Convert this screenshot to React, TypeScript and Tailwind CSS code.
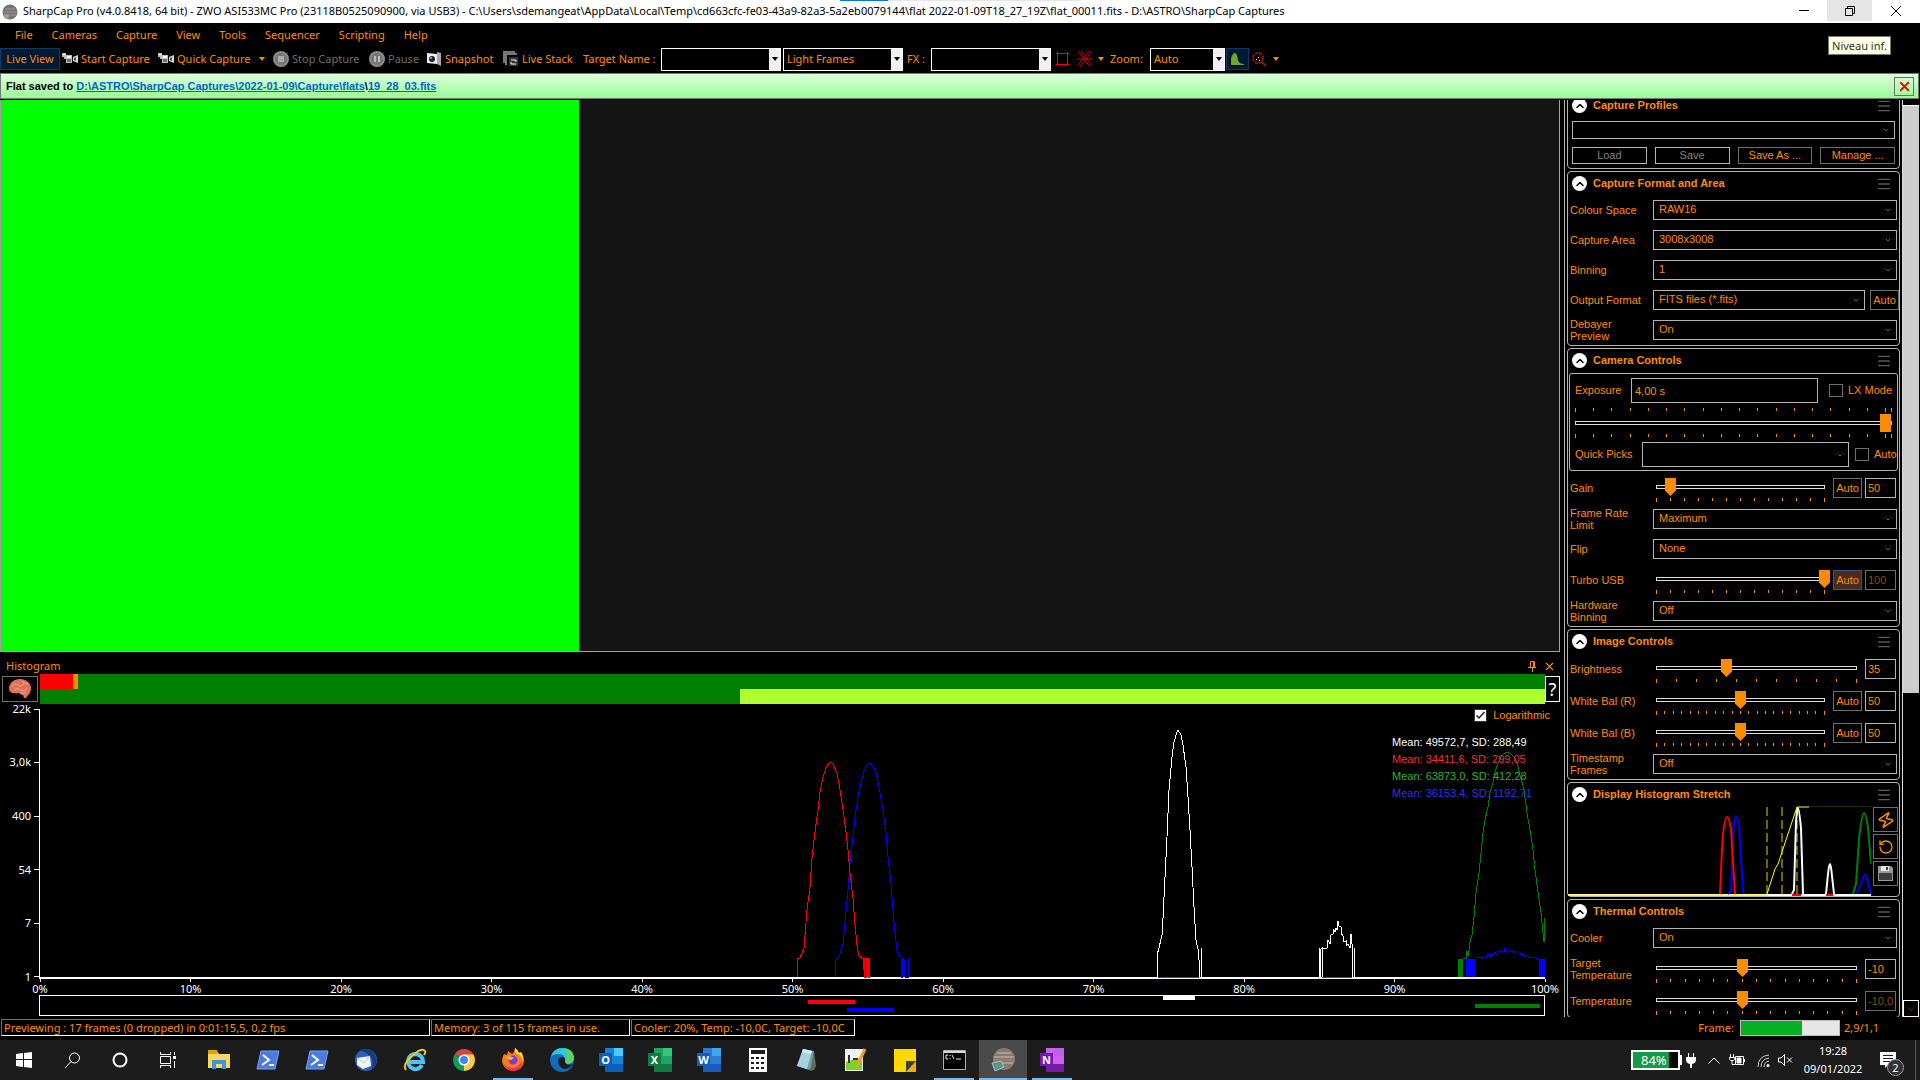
import React from "react";
import { ChevronDown, ChevronUp, Menu, RotateCcw, X, Zap } from "lucide-react";

const MENU = ["File", "Cameras", "Capture", "View", "Tools", "Sequencer", "Scripting", "Help"];

const UI = "font-['Noto_Sans','Open_Sans',sans-serif]";
const CLASSIC = "font-['Liberation_Sans',Arial,sans-serif]";

/* ---------- TOOLBAR ---------- */

const CameraIcon = () => (
  <svg width="16" height="14" viewBox="0 0 16 14">
    <path d="M0 1h4v2h6v8H4V7H2V5H0z" fill="#bdbdbd" />
    <path d="M1 2h3v1H1zM5 4h4v2H5z" fill="#fff" />
    <path d="M11 5l5-2v8l-5-2z" fill="#d8d8d8" />
    <path d="M5 7h4v3H5z" fill="#6f6f6f" />
    <path d="M12 6l2-1v4l-2-1z" fill="#555" />
  </svg>
);

const RoundIcon = ({ children }: { children: React.ReactNode }) => (
  <svg width="16" height="16" viewBox="0 0 16 16">
    <circle cx="8" cy="8" r="8" fill="#8a8a8a" />
    <circle cx="8" cy="8" r="6" fill="#767676" />
    {children}
  </svg>
);

const Caret = ({ className }: { className?: string }) => (
  <svg width="6" height="4" viewBox="0 0 6 4" className={className}>
    <path d="M0 0h6L3 4z" fill="currentColor" />
  </svg>
);

type ComboProps = { label: string; value?: string; className: string };

const ToolCombo = ({ label, value = "", className }: ComboProps) => (
  <div className={`flex h-[23px] border border-white bg-black ${className}`}>
    <select
      aria-label={label}
      defaultValue={value}
      className="min-w-0 flex-1 appearance-none bg-black pl-[3px] text-[#ff8c00] outline-none"
    >
      <option>{value}</option>
    </select>
    <span className="flex w-[11px] items-center justify-center bg-[#f0f0f0] text-black">
      <Caret />
    </span>
  </div>
);

const Toolbar = () => (
  <div className={`mb-[2px] flex h-[24px] shrink-0 items-center text-[11px] whitespace-nowrap text-[#ff8c00] ${UI}`}>
    <button className="h-[22px] w-[60px] border border-[#0c3a66] bg-[#001a33]">Live View</button>
    <button className="flex w-[95px] items-center gap-[3px] pl-[2px]">
      <CameraIcon />
      Start Capture
    </button>
    <button className="flex w-[118px] items-center gap-[3px] pl-[3px]">
      <CameraIcon />
      Quick Capture
      <Caret className="ml-[6px]" />
    </button>
    <button disabled className="flex w-[93px] items-center gap-[3px] text-[#6d6d6d]">
      <RoundIcon>
        <path d="M5 5h6v6H5z" fill="#aaa" />
      </RoundIcon>
      Stop Capture
    </button>
    <button disabled className="flex w-[60px] items-center gap-[3px] pl-[3px] text-[#6d6d6d]">
      <RoundIcon>
        <path d="M5 5h2v6H5zM9 5h2v6H9z" fill="#bbb" />
      </RoundIcon>
      Pause
    </button>
    <button className="flex w-[74px] items-center gap-[3px]">
      <svg width="16" height="14" viewBox="0 0 16 14">
        <path d="M1 1l10 1v10L1 11z" fill="#eee" />
        <path d="M11 0l4 1v13l-4-2z" fill="#aaa" />
        <circle cx="6" cy="7" r="3" fill="#222" />
        <circle cx="5" cy="6" r="1" fill="#6cf" />
      </svg>
      Snapshot
    </button>
    <button className="flex w-[83px] items-center gap-[3px] pl-[3px]">
      <svg width="16" height="16" viewBox="0 0 16 16" fill="none">
        <path d="M1 12V1h11M3 14V3h11" stroke="#777" strokeWidth="2" />
        <path d="M6 6h9v9H6z" fill="#333" />
        <path d="M8 9h5v2M13 13H8v-2" stroke="#fff" />
      </svg>
      Live Stack
    </button>
    <span className="w-[78px]">Target Name :</span>
    <ToolCombo label="Target name" className="w-[120px]" />
    <ToolCombo label="Frame type" value="Light Frames" className="ml-[2px] w-[120px]" />
    <span className="w-[28px] pl-1">FX :</span>
    <ToolCombo label="FX" className="w-[120px]" />
    <button aria-label="Selection area" className="w-[22px] pl-[5px]">
      <svg width="13" height="14" viewBox="0 0 13 14" fill="none" stroke="#f00">
        <path d="M1.5 1.5h10v11h-10z" />
        <path d="M0 1.5h3M1.5 0v3M10 1.5h3M11.5 0v3M0 12.5h3M1.5 11v3M10 12.5h3M11.5 11v3" />
      </svg>
    </button>
    <button aria-label="Reticule" className="flex w-[37px] items-center gap-[5px] pl-[4px]">
      <svg width="16" height="16" viewBox="0 0 16 16" fill="none" stroke="#d00000">
        <path d="M1 0l12 16M4 0l11 15M15 0L3 16M12 0L1 14M0 8h16" />
      </svg>
      <Caret />
    </button>
    <span className="w-[40px]">Zoom:</span>
    <ToolCombo label="Zoom" value="Auto" className="w-[75px]" />
    <button aria-label="Histogram" className="ml-px flex h-[22px] w-[23px] items-center justify-center border border-[#0c3a66] bg-[#001a33]">
      <svg width="15" height="14" viewBox="0 0 15 14">
        <path d="M1 13V6q2-5 4-5t3 7q1 4 6 4v1z" fill="#6aa832" />
        <path d="M0 0h1v13h14v1H0z" fill="#000" />
      </svg>
    </button>
    <button aria-label="Focus assistant" className="flex items-center gap-[6px] pl-[3px]">
      <svg width="15" height="15" viewBox="0 0 15 15" fill="none">
        <circle cx="6" cy="6" r="5" stroke="#8b1a1a" strokeWidth="2" strokeDasharray="3 1" />
        <path d="M10 10l4 4" stroke="#8b1a1a" strokeWidth="2" />
        <path d="M6 5h1v1H6zM4 7h1v1H4zM7 8h1v1H7z" fill="#fff" />
      </svg>
      <Caret />
    </button>
  </div>
);

/* ---------- HISTOGRAM ---------- */

const Y_LABELS = ["22k", "3,0k", "400", "54", "7", "1"];
const X_LABELS = ["0%", "10%", "20%", "30%", "40%", "50%", "60%", "70%", "80%", "90%", "100%"];

const CURVES = [
  {
    color: "#00f",
    points:
      "835,977 836,959 839,957 843,944 845,923 848,890 850,863 853,837 855,817 858,797 861,783 864,771 867,765 869,763 872,765 876,772 879,787 883,810 886,833 888,857 891,883 893,910 895,933 897,950 899,955 901,958 901,977 902,977 902,958 903,977 903,958 904,977 904,960 905,977 905,977 908,977 908,958 909,977",
  },
  {
    color: "#f00",
    points:
      "797,977 797,959 800,958 802,953 804,948 807,910 810,887 812,858 815,832 818,810 820,792 823,777 826,768 829,763 831,762 833,764 837,773 840,790 843,810 846,832 848,850 850,873 853,898 855,925 857,945 859,956 863,959 863,970 864,958 864,977 866,977 866,958 867,977 867,960 868,958 868,977 869,977 869,959",
  },
  {
    color: "#fff",
    points:
      "1157,977 1157,955 1159,948 1162,935 1163,918 1165,877 1167,837 1169,790 1172,757 1174,742 1177,732 1178,730 1181,735 1183,745 1186,767 1188,797 1190,830 1192,867 1194,907 1196,940 1198,949 1199,960 1199,977 1201,977 1201,948 1202,977",
  },
  {
    color: "#fff",
    points:
      "1319,977 1319,948 1320,977 1320,950 1322,948 1322,977 1322,948 1327,948 1328,940 1330,944 1331,935 1333,934 1333,929 1335,932 1336,928 1337,930 1338,921 1339,926 1341,927 1341,933 1343,936 1344,942 1346,941 1346,946 1348,944 1350,948 1351,934 1351,943 1352,944 1352,977 1354,977 1354,948",
  },
  {
    color: "#008000",
    points:
      "1458,959 1458,977 1459,959 1460,977 1460,959 1461,977 1462,959 1462,977 1463,959 1466,958 1467,951 1468,956 1469,950 1470,942 1472,935 1474,917 1476,893 1479,873 1481,853 1483,833 1485,820 1488,807 1490,793 1493,782 1495,772 1498,763 1501,757 1504,754 1507,752 1511,754 1514,757 1517,763 1520,775 1524,790 1527,813 1530,830 1533,850 1535,870 1538,892 1541,913 1543,933 1544,942 1544,918",
  },
  {
    color: "#00f",
    points:
      "1466,958 1466,977 1467,959 1468,977 1469,959 1470,975 1471,959 1472,977 1473,959 1474,977 1475,959 1476,958 1480,957 1482,959 1484,956 1486,958 1488,954 1490,957 1491,953 1493,956 1495,952 1496,955 1498,951 1500,953 1502,950 1504,952 1505,948 1506,953 1508,950 1510,952 1512,950 1514,953 1516,951 1518,953 1520,953 1522,956 1523,953 1525,957 1527,955 1530,958 1533,957 1539,959 1540,977 1541,959 1542,977 1542,959 1543,977 1544,959 1544,977",
  },
];

const STATS = [
  { text: "Mean: 49572,7, SD: 288,49", className: "text-white" },
  { text: "Mean: 34411,6, SD: 299,05", className: "text-[#f03030]" },
  { text: "Mean: 63873,0, SD: 412,28", className: "text-[#30b030]" },
  { text: "Mean: 36153,4, SD: 1192,71", className: "text-[#3030f0]" },
];

const BrainIcon = () => (
  <svg width="24" height="20" viewBox="0 0 24 20">
    <path d="M1 10C1 4 6 0 12 0s11 4 11 9c0 3-1 6-3 7l-2 3h-2l-1-3c-2 0-3-1-4-2-2 1-4 0-6 0-2 0-4-2-4-4z" fill="#e0715a" />
    <path d="M4 7q3-4 6-1t6-2M6 11q3-3 6 0t7-2M14 2q3 3 6 3M13 14q3 1 5-1" stroke="#f3a490" fill="none" />
  </svg>
);

const Histogram = () => (
  <section className="shrink-0">
    <div className={`flex h-[22px] items-center pt-[6px] pr-[4px] pl-[6px] text-[11px] text-[#ff8c00] ${UI}`}>
      <h2 className="flex-1">Histogram</h2>
      <button aria-label="Pin" className="mr-[6px]">
        <svg width="9" height="11" viewBox="0 0 9 11" fill="none" stroke="currentColor">
          <path d="M2.5 6V.5h4V6M0 6.5h8M4.5 7v4M5.5 1v5" />
        </svg>
      </button>
      <button aria-label="Close histogram">
        <X size={13} />
      </button>
    </div>

    <div className="grid grid-cols-[40px_1fr_15px]">
      {/* EXPOSURE QUALITY BAR */}
      <button aria-label="Smart histogram" className="mx-[2px] my-[2px] flex h-[26px] items-center justify-center border border-[#6e6e6e]">
        <BrainIcon />
      </button>
      <div className="h-[30px] bg-[#008000]">
        <div className="flex h-[15px]">
          <div className="w-[33px] bg-[#f00]" />
          <div className="w-[5px] bg-[#ff8c00]" />
        </div>
        <div className="ml-[46.5%] h-[15px] bg-[#adff2f]" />
      </div>
      <button className={`my-[2px] h-[26px] border border-white text-[18px] leading-none text-white ${UI}`}>?</button>

      {/* Y AXIS */}
      <div className={`flex flex-col justify-between pt-[5px] pr-px pb-[2px] text-[11px] text-white ${UI}`}>
        {Y_LABELS.map(label => (
          <div key={label} className="flex h-0 items-center justify-end gap-[3px]">
            {label}
            <span className="h-px w-[5px] bg-white" />
          </div>
        ))}
      </div>

      {/* PLOT */}
      <div className="relative h-[275px]">
        <svg
          className="-ml-px h-full w-[calc(100%+1px)]"
          viewBox="39 704 1506 275"
          preserveAspectRatio="none"
          shapeRendering="crispEdges"
          fill="none"
        >
          <path d="M39.5 709V978" stroke="#fff" />
          <path d="M39 978H1545" stroke="#fff" strokeWidth="2" />
          {CURVES.map(curve => (
            <polyline key={curve.points} points={curve.points} stroke={curve.color} vectorEffect="non-scaling-stroke" />
          ))}
          <path d="M1158 977.5h41M1322 977.5h30" stroke="#f00" />
        </svg>
        <div className={`absolute top-[3px] right-[-5px] text-[11px] ${CLASSIC}`}>
          <label className="flex h-[16px] items-center gap-[6px] text-[#ff8c00]">
            <span className="grid">
              <input type="checkbox" defaultChecked className="h-[13px] w-[13px] appearance-none border border-[#333] bg-white [grid-area:1/1]" />
              <svg width="13" height="13" viewBox="0 0 13 13" fill="none" className="pointer-events-none [grid-area:1/1]">
                <path d="M2.5 6.5L5 9l5.5-6" stroke="#222" strokeWidth="1.5" />
              </svg>
            </span>
            Logarithmic
          </label>
        </div>
        <div className={`absolute top-[30px] right-[16px] w-[137px] text-[11px] leading-[17px] whitespace-nowrap ${CLASSIC}`}>
          {STATS.map(stat => (
            <div key={stat.text} className={stat.className}>
              {stat.text}
            </div>
          ))}
        </div>
      </div>
      <div />

      {/* X AXIS */}
      <div />
      <div className={`flex h-[16px] justify-between text-[11px] leading-[14px] text-white ${UI}`}>
        {X_LABELS.map(label => (
          <div key={label} className="flex w-0 flex-col items-center">
            <span className="h-[3px] w-px shrink-0 bg-white" />
            {label}
          </div>
        ))}
      </div>
      <div />

      {/* CHANNEL RANGES */}
      <div />
      <svg
        className="-ml-px h-[22px] w-[calc(100%+1px)]"
        viewBox="39 995 1506 22"
        preserveAspectRatio="none"
        shapeRendering="crispEdges"
      >
        <path d="M39.5 995.5h1505v20h-1505z" fill="none" stroke="#fff" />
        <path d="M808 1000h47v4h-47z" fill="#f00" />
        <path d="M847 1008h47v4h-47z" fill="#00f" />
        <path d="M1163 995h32v5h-32z" fill="#fff" />
        <path d="M1475 1004h65v4h-65z" fill="#008000" />
      </svg>
      <div />
    </div>
  </section>
);

/* ---------- SIDE PANEL ---------- */

const Group = ({ title, children }: { title: string; children: React.ReactNode }) => (
  <section className="shrink-0 rounded-[4px] border border-[#b4b4b4]">
    <div className="flex h-[23px] items-center pr-[7px] pl-[4px]">
      <button aria-label={`Collapse ${title}`} className="flex h-[15px] w-[15px] items-center justify-center rounded-full bg-white text-black">
        <ChevronUp size={12} strokeWidth={3} />
      </button>
      <h2 className="ml-[6px] flex-1 font-bold">{title}</h2>
      <button aria-label={`${title} menu`} className="text-[#5a5a5a]">
        <Menu size={16} strokeWidth={2} />
      </button>
    </div>
    {children}
  </section>
);

const PanelSelect = ({ label, value = "", className = "" }: { label: string; value?: string; className?: string }) => (
  <div className={`grid min-w-0 grid-rows-[minmax(0,1fr)] border border-[#b4b4b4] ${className}`}>
    <select
      aria-label={label}
      defaultValue={value}
      className="h-full min-h-0 min-w-0 appearance-none bg-transparent pb-[2px] pl-[5px] leading-[14px] outline-none [grid-area:1/1]"
    >
      <option>{value}</option>
    </select>
    <ChevronDown size={8} className="pointer-events-none mr-[4px] self-center justify-self-end text-[#8a8a8a] [grid-area:1/1]" />
  </div>
);

const SelectRow = ({ label, value, auto }: { label: string; value: string; auto?: boolean }) => (
  <div className="flex h-[30px] items-center pr-[2px] pl-[2px]">
    <span className="w-[83px] shrink-0 pr-[8px] leading-[12px]">{label}</span>
    <PanelSelect label={label} value={value} className="h-[20px] flex-1" />
    {auto && <button className="-mr-[2px] ml-[5px] h-[20px] w-[29px] border border-[#6e6e6e]">Auto</button>}
  </div>
);

const Ticks = ({ count }: { count: number }) => (
  <div className="mx-[5px] flex justify-between">
    {Array.from({ length: count }, (_, i) => (
      <span key={i} className={`w-px bg-[#ff8c00] ${i === 0 || i === count - 1 ? "h-[4px]" : "h-[3px]"}`} />
    ))}
  </div>
);

type RangeProps = { label: string; value: number; pointed?: boolean };

const Range = ({ label, value, pointed }: RangeProps) => (
  <div className="grid items-center">
    <div className="mx-[5px] h-[4px] border border-[#dcdcdc] [grid-area:1/1]" />
    <input
      type="range"
      aria-label={label}
      min={0}
      max={1000}
      defaultValue={value}
      className={`h-[18px] w-full min-w-0 appearance-none bg-transparent [grid-area:1/1] [&::-webkit-slider-thumb]:h-[18px] [&::-webkit-slider-thumb]:w-[11px] [&::-webkit-slider-thumb]:appearance-none [&::-webkit-slider-thumb]:bg-[#ff8c00] ${
        pointed ? "[&::-webkit-slider-thumb]:[clip-path:polygon(0_0,100%_0,100%_70%,50%_100%,0_70%)]" : ""
      }`}
    />
  </div>
);

type SliderRowProps = {
  label: string;
  value: number;
  ticks: number;
  text: string;
  auto?: "off" | "on";
  disabled?: boolean;
};

const SliderRow = ({ label, value, ticks, text, auto, disabled }: SliderRowProps) => (
  <div className="flex h-[32px] items-start gap-[3px] pt-[6px] pr-[3px] pl-[2px]">
    <span className="-mr-[3px] flex h-[20px] w-[81px] shrink-0 items-center pr-[10px] leading-[12px]">{label}</span>
    <div className="min-w-0 flex-1">
      <Range label={label} value={value} pointed />
      <div className="h-[2px]" />
      <Ticks count={ticks} />
    </div>
    {auto && (
      <button className={`h-[20px] w-[29px] border ${auto === "on" ? "border-[#2a5a8c] bg-[#4a2a1c]" : "border-[#6e6e6e]"}`}>
        Auto
      </button>
    )}
    <input
      aria-label={`${label} value`}
      defaultValue={text}
      disabled={disabled}
      className={`h-[20px] w-[31px] border bg-black pl-[2px] outline-none ${disabled ? "border-[#6e6e6e] text-[#8a4c00]" : "border-[#b4b4b4]"}`}
    />
  </div>
);

const CheckBox = ({ label }: { label: string }) => (
  <label className="flex shrink-0 items-center gap-[5px] whitespace-nowrap">
    <input type="checkbox" className="h-[13px] w-[14px] appearance-none border border-[#6e6e6e] bg-black" />
    {label}
  </label>
);

/* the last step of the exposure scale is shorter than the others */
const ExposureTicks = () => (
  <div className="flex h-[4px] items-center">
    <div className="flex-1">
      <Ticks count={18} />
    </div>
    <span className="mr-[5px] h-[4px] w-px bg-[#ff8c00]" />
  </div>
);

const Exposure = () => (
  <div className="mx-px my-px h-[98px] rounded-[3px] border border-[#b4b4b4]">
    <div className="mt-[4px] flex h-[25px] items-center pl-[5px]">
      <label htmlFor="exposure" className="w-[56px]">
        Exposure
      </label>
      <input
        id="exposure"
        defaultValue="4,00 s"
        className="h-[25px] min-w-0 flex-1 border border-[#b4b4b4] bg-black pl-[3px] outline-none"
      />
      <div className="w-[79px] shrink-0 pl-[11px]">
        <CheckBox label="LX Mode" />
      </div>
    </div>
    <div className="pt-[5px]">
      <ExposureTicks />
      <div className="h-[2px]" />
      <Range label="Exposure" value={981} />
      <div className="h-[2px]" />
      <ExposureTicks />
    </div>
    <div className="mt-[4px] flex h-[25px] items-center pl-[5px]">
      <span className="w-[67px] shrink-0">Quick Picks</span>
      <PanelSelect label="Quick picks" className="h-[25px] flex-1" />
      <div className="w-[48px] shrink-0 pl-[6px]">
        <CheckBox label="Auto" />
      </div>
    </div>
  </div>
);

const Stretch = () => (
  <div className="flex h-[90px]">
    <svg width="303" height="90" viewBox="0 0 303 90" fill="none" strokeWidth="2">
      <path d="M0 89h303" stroke="#fff" />
      <path d="M0 89.5h199" stroke="#ff0" />
      <path d="M199 1v88M214 1v88M229 1v88" stroke="#6b6b00" strokeDasharray="9 4" />
      <path d="M160 88l3-3 2-60q2-15 3-15t3 8l4 67 1 3" stroke="#00f" />
      <path d="M152 88l2-45q2-32 5-32 2 0 4 12l4 65" stroke="#f00" />
      <path d="M224 88l2-4 2-68q1-14 2-14t3 20l2 66" stroke="#fff" />
      <path d="M258 88l2-20q1-10 2-10t2 12l2 18" stroke="#fff" />
      <path d="M285 88l3-10 3-45q3-26 5-26t4 15l3 36" stroke="#008000" />
      <path d="M289 88l4-10q2-9 4-9t3 8l3 11" stroke="#00f" />
      <path d="M224 89h9M258 89h7" stroke="#f00" />
      <path d="M199 88l8-25 3-5 19-57h12" stroke="#ff0" strokeWidth="1" />
      <path d="M241 .5h62" stroke="#2a2a00" strokeWidth="1" />
    </svg>
    <div className="flex flex-1 flex-col items-end gap-[2px] pt-px pr-px">
      <button aria-label="Auto stretch" className="flex h-[25px] w-[25px] items-center justify-center border border-[#6e6e6e]">
        <Zap size={18} strokeWidth={2} className="rotate-12" />
      </button>
      <button aria-label="Reset stretch" className="flex h-[25px] w-[25px] items-center justify-center border border-[#6e6e6e]">
        <RotateCcw size={16} strokeWidth={2} />
      </button>
      <button aria-label="Save stretch" className="flex h-[25px] w-[25px] items-center justify-center border border-[#6e6e6e]">
        <svg width="15" height="15" viewBox="0 0 15 15">
          <path d="M0 0h13l2 2v13H0z" fill="#9a9a9a" />
          <path d="M3 0h8v5H3z" fill="#e8e8e8" />
          <path d="M8 1h2v3H8zM1 7h13v7H1z" fill="#3c3c3c" />
        </svg>
      </button>
    </div>
  </div>
);

const SidePanel = () => (
  <aside className={`flex w-[356px] shrink-0 border-l border-[#b4b4b4] text-[11px] text-[#ff8c00] ${CLASSIC}`}>
    <div className="min-h-0 flex-1 overflow-hidden pr-[2px] pl-[2px]">
      <div className="-mt-[7px] flex flex-col gap-[2px]">
        <Group title="Capture Profiles">
          <div className="h-[51px] px-[4px] pt-[4px]">
            <PanelSelect label="Capture profile" className="h-[18px]" />
            <div className="mt-[8px] grid grid-cols-4 gap-[8px]">
              <button disabled className="h-[17px] border border-[#b4b4b4] leading-none text-[#808080]">Load</button>
              <button disabled className="h-[17px] border border-[#b4b4b4] leading-none text-[#808080]">Save</button>
              <button className="h-[17px] border border-[#6e6e6e] leading-none">Save As ...</button>
              <button className="h-[17px] border border-[#6e6e6e] leading-none">Manage ...</button>
            </div>
          </div>
        </Group>

        <Group title="Capture Format and Area">
          <SelectRow label="Colour Space" value="RAW16" />
          <SelectRow label="Capture Area" value="3008x3008" />
          <SelectRow label="Binning" value="1" />
          <SelectRow label="Output Format" value="FITS files (*.fits)" auto />
          <SelectRow label="Debayer Preview" value="On" />
        </Group>

        <Group title="Camera Controls">
          <Exposure />
          <SliderRow label="Gain" value={83} ticks={13} text="50" auto="off" />
          <SelectRow label="Frame Rate Limit" value="Maximum" />
          <SelectRow label="Flip" value="None" />
          <SliderRow label="Turbo USB" value={1000} ticks={13} text="100" auto="on" disabled />
          <SelectRow label="Hardware Binning" value="Off" />
        </Group>

        <Group title="Image Controls">
          <SliderRow label="Brightness" value={350} ticks={11} text="35" />
          <SliderRow label="White Bal (R)" value={500} ticks={21} text="50" auto="off" />
          <SliderRow label="White Bal (B)" value={500} ticks={21} text="50" auto="off" />
          <SelectRow label="Timestamp Frames" value="Off" />
        </Group>

        <Group title="Display Histogram Stretch">
          <Stretch />
        </Group>

        <Group title="Thermal Controls">
          <SelectRow label="Cooler" value="On" />
          <SliderRow label="Target Temperature" value={430} ticks={15} text="-10" />
          <SliderRow label="Temperature" value={430} ticks={15} text="-10,0" disabled />
        </Group>
      </div>
    </div>

    {/* SCROLLBAR */}
    <div className="flex w-[18px] flex-col border-l border-[#dcdcdc] pr-px">
      <div className="h-[6px] border-b border-white bg-black" />
      <div className="h-[64%] bg-[#cdcdcd]" />
      <div className="flex-1" />
      <button aria-label="Scroll down" className="flex h-[17px] items-center justify-center border border-white text-[#7a3030]">
        <ChevronDown size={10} />
      </button>
    </div>
  </aside>
);

/* ---------- TASKBAR ---------- */

const OfficeIcon = ({ letter, dark, mid, light }: { letter: string; dark: string; mid: string; light: string }) => (
  <svg width="24" height="24" viewBox="0 0 24 24">
    <path d="M6 0h18v24H6z" fill={mid} />
    <path d="M15 0h9v8h-9z" fill={light} />
    <path d="M6 16h18v8H6z" fill={dark} />
    <path d="M0 5h13v13H0z" fill={dark} />
    <text x="6.5" y="15.5" textAnchor="middle" fontSize="11" fontWeight="700" fill="#fff" className={UI}>
      {letter}
    </text>
  </svg>
);

const PowerShell = () => (
  <svg width="24" height="20" viewBox="0 0 24 20">
    <path d="M5 1h18l-4 18H1z" fill="#4a7be0" stroke="#7aa0ee" />
    <path d="M7 5l6 5-7 5M13 15h5" stroke="#fff" strokeWidth="2" fill="none" />
  </svg>
);

const APPS: { name: string; state?: "open" | "active"; icon: React.ReactNode }[] = [
  {
    name: "File Explorer",
    icon: (
      <svg width="22" height="20" viewBox="0 0 22 20">
        <path d="M0 1h9l2 3h11v14H0z" fill="#ffd65c" />
        <path d="M0 0h9v4H0z" fill="#e0a010" />
        <path d="M4 10h14v9h-4v-5H8v5H4z" fill="#3a96dd" />
      </svg>
    ),
  },
  { name: "PowerShell", icon: <PowerShell /> },
  { name: "PowerShell ISE", icon: <PowerShell /> },
  {
    name: "Thunderbird",
    icon: (
      <svg width="24" height="24" viewBox="0 0 24 24">
        <circle cx="12" cy="12" r="11" fill="#2a62b8" />
        <path d="M5 3q8-5 14 1 6 7 2 14l-4 4q4-9-1-14T5 3z" fill="#173a80" />
        <path d="M3 10l13-2 1 10-8 3-6-4z" fill="#f4f4f4" />
        <path d="M3 10l7 5 6-7" stroke="#b8c4d4" fill="none" />
      </svg>
    ),
  },
  {
    name: "Internet Explorer",
    icon: (
      <svg width="24" height="24" viewBox="0 0 24 24" fill="none">
        <path d="M19 17q-3 5-8 4-6-2-6-8 1-7 8-7 7 1 7 8H7" stroke="#4cc3f0" strokeWidth="4" />
        <path d="M3 22Q-1 17 9 8T22 3q1 1-1 4" stroke="#f5c518" strokeWidth="2" />
      </svg>
    ),
  },
  {
    name: "Chrome",
    icon: (
      <svg width="24" height="24" viewBox="0 0 24 24">
        <path d="M12 12L2.5 6.5A11 11 0 0 1 21.5 6.5z" fill="#db4437" />
        <path d="M12 12L21.5 6.5A11 11 0 0 1 12 23z" fill="#ffcd40" />
        <path d="M12 12V23A11 11 0 0 1 2.5 6.5z" fill="#0f9d58" />
        <path d="M12 6.5h9.5L17 15z" fill="#ffcd40" />
        <circle cx="12" cy="12" r="5.5" fill="#fff" />
        <circle cx="12" cy="12" r="4" fill="#4285f4" />
      </svg>
    ),
  },
  {
    name: "Firefox",
    state: "open",
    icon: (
      <svg width="24" height="24" viewBox="0 0 24 24">
        <path d="M3 6l3 1 1-4 4 3q2-1 3-6 3 2 4 5l2-1q3 4 3 9-1 9-11 10Q2 22 1 13q0-4 2-7z" fill="#ff7a1a" />
        <path d="M2 14q2 6 9 6t10-7q1 8-9 10Q3 22 2 14z" fill="#ff2a5f" />
        <path d="M14 0q3 2 4 5l2-1q3 4 2 9-2-6-6-7-3-2-2-6z" fill="#ffd43a" />
        <circle cx="12" cy="12" r="4.5" fill="#7a3fe0" />
        <path d="M5 9q4-2 8 1l-3 2q-3 0-5-3z" fill="#ffb02a" />
      </svg>
    ),
  },
  {
    name: "Edge",
    icon: (
      <svg width="24" height="24" viewBox="0 0 24 24">
        <circle cx="12" cy="12" r="12" fill="#0f6cbd" />
        <path d="M1 9Q3 0 13 0q10 1 11 9 0 7-7 7-4-1-2-4 0-6-7-6-5 0-7 3z" fill="#2fc6d8" />
        <path d="M14 0q9 1 10 9 0 7-7 7-3-1-2-3 6-6-1-13z" fill="#5ad65c" />
        <path d="M8 12q1-3 5-3 3 1 2 4 0 3 4 4l4-1q-4 5-9 5-6-2-6-9z" fill="#1c1c1c" />
      </svg>
    ),
  },
  { name: "Outlook", icon: <OfficeIcon letter="O" dark="#0a5fb8" mid="#1484d8" light="#4cc8f8" /> },
  { name: "Excel", icon: <OfficeIcon letter="X" dark="#107c41" mid="#21a366" light="#33c481" /> },
  { name: "Word", icon: <OfficeIcon letter="W" dark="#185abd" mid="#2b7cd3" light="#41a5ee" /> },
  {
    name: "Calculator",
    icon: (
      <svg width="18" height="24" viewBox="0 0 18 24">
        <path d="M0 0h18v24H0z" fill="#fff" />
        <path d="M2 2h14v4H2zM2 9h3v2H2zM7 9h3v2H7zM12 9h3v2h-3zM2 14h3v2H2zM7 14h3v2H7zM12 14h3v2h-3zM2 19h3v2H2zM7 19h3v2H7zM12 19h3v2h-3z" fill="#1c1c1c" />
      </svg>
    ),
  },
  {
    name: "Notepad",
    icon: (
      <svg width="24" height="24" viewBox="0 0 24 24">
        <path d="M8 1l11 2-1 17-4 2-12-4z" fill="#5fa3b4" />
        <path d="M8 1l9 2-5 18-10-3z" fill="#a6d3de" />
        <path d="M8 1l9 2-1 3-9-2z" fill="#d8eef4" />
        <path d="M19 3l2 15-2 4-4 1z" fill="#6e6650" />
      </svg>
    ),
  },
  {
    name: "Notepad++",
    icon: (
      <svg width="22" height="24" viewBox="0 0 22 24">
        <path d="M0 1h18v22H0z" fill="#f2f2f2" />
        <path d="M1 14q8-4 16-2v10H1z" fill="#7ed321" />
        <path d="M4 7v8M8 11h5" stroke="#333" strokeWidth="2" />
        <path d="M20 1l-8 17" stroke="#f0a020" strokeWidth="3" />
      </svg>
    ),
  },
  {
    name: "Sticky Notes",
    icon: (
      <svg width="22" height="23" viewBox="0 0 22 23">
        <path d="M0 0h22v12L12 23H0z" fill="#ffd800" />
        <path d="M12 12h10L12 23z" fill="#3c3c3c" />
        <path d="M22 12v11H12z" fill="#f0b000" />
      </svg>
    ),
  },
  {
    name: "Command Prompt",
    state: "open",
    icon: (
      <svg width="23" height="20" viewBox="0 0 23 20">
        <path d="M.5 .5h22v19H.5z" fill="#000" stroke="#b0b0b0" />
        <path d="M1 1h21v2H1z" fill="#d8d8d8" />
        <path d="M5 5H3v4h2M7 5v1M7 8v1M9 5l2 4M13 9h5" stroke="#eee" fill="none" />
      </svg>
    ),
  },
  {
    name: "SharpCap",
    state: "active",
    icon: (
      <svg width="24" height="24" viewBox="0 0 24 24">
        <circle cx="13" cy="11" r="11" fill="#857a74" />
        <path d="M6 5h14M3 9h20M4 15h18" stroke="#a89a90" strokeWidth="2" />
        <path d="M3 12h20" stroke="#b07a60" />
        <path d="M1 15l9-2 3 6-9 4z" fill="#4f9a8a" stroke="#b8b8b8" />
      </svg>
    ),
  },
  { name: "OneNote", state: "open", icon: <OfficeIcon letter="N" dark="#7719aa" mid="#ca64ea" light="#c060e8" /> },
];

const Taskbar = () => (
  <footer className={`flex h-[40px] shrink-0 items-stretch bg-[#1c1c1c] text-[11px] text-white ${UI}`}>
    <div className="flex">
      <button aria-label="Start" className="flex w-[48px] items-center justify-center">
        <svg width="16" height="16" viewBox="0 0 16 16" fill="#fff">
          <path d="M0 2l7-1v6H0zM8 1l8-1v7H8zM0 8h7v7l-7-1zM8 8h8v8l-8-1z" />
        </svg>
      </button>
      <button aria-label="Search" className="flex w-[48px] items-center justify-center">
        <svg width="17" height="17" viewBox="0 0 17 17" fill="none" stroke="#fff">
          <circle cx="10.5" cy="6" r="5" />
          <path d="M7 9.5L1 16" />
        </svg>
      </button>
      <button aria-label="Cortana" className="flex w-[48px] items-center justify-center">
        <svg width="16" height="16" viewBox="0 0 16 16" fill="none">
          <circle cx="8" cy="8" r="6.5" stroke="#fff" strokeWidth="2" />
        </svg>
      </button>
      <button aria-label="Task view" className="mr-[3px] flex w-[48px] items-center justify-center">
        <svg width="16" height="16" viewBox="0 0 16 16" fill="none" stroke="#fff">
          <path d="M.5 0v2.5h10V0M.5 16v-2.5h10V16M.5 4.5h10v7H.5zM14.5 0v3M14.5 9v7" />
          <path d="M13 4h3v3h-3z" fill="#fff" stroke="none" />
        </svg>
      </button>
    </div>

    <div className="flex flex-1 gap-px">
      {APPS.map(app => (
        <button
          key={app.name}
          aria-label={app.name}
          className={`flex w-[48px] flex-col items-center ${app.state === "active" ? "bg-[#4a4a4a]" : ""}`}
        >
          <span className="flex flex-1 items-center pt-[2px]">{app.icon}</span>
          <span
            className={`h-[2px] ${app.state ? "bg-[#76b9ed]" : ""} ${app.state === "active" ? "w-full" : "w-[40px]"}`}
          />
        </button>
      ))}
    </div>

    {/* TRAY */}
    <div className="flex items-center">
      <div className="flex items-center">
        <div className="h-[20px] w-[49px] border-2 border-white bg-black">
          <div className="flex h-full w-[80%] items-center bg-[#169c48] pl-[8px] text-[13px] leading-none whitespace-nowrap">84%</div>
        </div>
        <div className="h-[10px] w-[2px] bg-white" />
      </div>
      <svg width="10" height="15" viewBox="0 0 10 15" className="ml-[4px]" fill="#fff">
        <path d="M2 0h1v4H2zM7 0h1v4H7zM0 4h10v3q0 3-4 4v4H4v-4Q0 10 0 7z" />
      </svg>
      <svg width="12" height="7" viewBox="0 0 12 7" className="ml-[12px]" fill="none" stroke="#fff">
        <path d="M.5 6.5L6 1l5.5 5.5" />
      </svg>
      <svg width="17" height="12" viewBox="0 0 17 12" className="ml-[9px]" fill="none" stroke="#fff">
        <path d="M6.5 2.5h8v8h-8zM15.5 5v3M1.5 0v3M4.5 0v3M.5 3.5h5v2l-1 1h-3l-1-1zM3 7v3.5h3" />
        <path d="M8 4h4v5H8z" fill="#fff" />
      </svg>
      <svg width="13" height="13" viewBox="0 0 13 13" className="ml-[11px]" fill="none" stroke="#ccc">
        <path d="M1 13Q1 2 12 1M4 13q0-8 8-9M7 13q0-5 5-6" />
        <circle cx="11" cy="11.5" r="1.5" fill="#fff" stroke="none" />
      </svg>
      <svg width="15" height="12" viewBox="0 0 15 12" className="ml-[8px]" fill="none" stroke="#fff">
        <path d="M.5 4v4H3l3.5 3.5V.5L3 4zM9 3.5l5 5M14 3.5l-5 5" />
      </svg>
      <div className="ml-[8px] w-[64px] text-center leading-[18px]">
        <div>19:28</div>
        <div>09/01/2022</div>
      </div>
      <button aria-label="Notifications" className="relative ml-[15px]">
        <svg width="16" height="16" viewBox="0 0 16 16">
          <path d="M0 0h16v13H8l-3 3v-3H0z" fill="#fff" />
          <path d="M3 3.5h10M3 6.5h10M3 9.5h7" stroke="#1c1c1c" />
        </svg>
        <span className="absolute -right-[8px] -bottom-[8px] flex h-[17px] w-[17px] items-center justify-center rounded-full border border-[#9a9a9a] bg-[#333] leading-none">
          2
        </span>
      </button>
      <div className="mr-[4px] ml-[19px] h-[40px] w-px bg-[#5a5a5a]" />
    </div>
  </footer>
);

/* ---------- WINDOW ---------- */

const App: React.FC = () => {
  return (
    <div className="relative flex h-screen flex-col overflow-hidden bg-black">

      {/* TITLE BAR */}
      <header className={`flex h-[23px] shrink-0 items-center bg-white text-[11px] text-black ${UI}`}>
        <svg width="16" height="16" viewBox="0 0 16 16" className="ml-[2px]">
          <circle cx="8" cy="8" r="7.5" fill="#77726f" />
          <path d="M3 5h10M1 8h14M2 11h12" stroke="#a09a94" />
          <path d="M1 11l5-1 1 4-4 1z" fill="#89a89a" />
        </svg>
        <h1 className="ml-[5px] min-w-0 flex-1 truncate">
          SharpCap Pro (v4.0.8418, 64 bit) - ZWO ASI533MC Pro (23118B0525090900, via USB3) - C:\Users\sdemangeat\AppData\Local\Temp\cd663cfc-fe03-43a9-82a3-5a2eb0079144\flat 2022-01-09T18_27_19Z\flat_00011.fits - D:\ASTRO\SharpCap Captures
        </h1>
        <div className="flex h-[21px] shrink-0 self-start">
          <button aria-label="Minimize" className="flex w-[46px] items-center justify-center">
            <span className="h-px w-[10px] bg-black" />
          </button>
          <button aria-label="Restore" className="flex w-[45px] items-center justify-center bg-[#e5e5e5]">
            <svg width="10" height="10" viewBox="0 0 10 10" fill="none" stroke="#000">
              <path d="M.5 2.5h7v7h-7zM2.5 2V.5h7v7H8" />
            </svg>
          </button>
          <button aria-label="Close" className="flex w-[48px] items-center justify-center">
            <svg width="10" height="10" viewBox="0 0 10 10" stroke="#000">
              <path d="M0 0l10 10M10 0L0 10" />
            </svg>
          </button>
        </div>
      </header>
      <div className="absolute top-0 left-[840px] flex h-px w-[241px] bg-[#e5e5e5]">
        <div className="w-[48px] bg-[#0078d7]" />
      </div>
      <div role="tooltip" className={`absolute top-[36px] right-[29px] z-10 border border-[#767676] bg-[#ffffe1] px-[3px] text-[11px] leading-[17px] text-[#333] ${UI}`}>
        Niveau inf.
      </div>

      {/* MENU + TOOLBAR */}
      <nav className={`flex h-[24px] shrink-0 items-center gap-[19px] pl-[15px] text-[11px] text-[#ff8c00] ${UI}`}>
        {MENU.map(item => (
          <button key={item}>{item}</button>
        ))}
      </nav>
      <Toolbar />

      {/* NOTIFICATION */}
      <div className={`mr-px flex h-[26px] shrink-0 items-center border border-[#6e7a6e] bg-linear-to-b from-[#dcffdc] to-[#98fb98] pr-[4px] pl-[5px] text-[11px] font-bold text-black ${CLASSIC}`}>
        <p className="flex-1">
          Flat saved to{" "}
          <a href="#folder" className="text-[#0066cc] underline">D:\ASTRO\SharpCap Captures\2022-01-09\Capture\flats</a>\
          <a href="#file" className="text-[#0066cc] underline">19_28_03.fits</a>
        </p>
        <button aria-label="Dismiss" className="flex h-[19px] w-[20px] items-center justify-center border border-[#6e6e6e] text-[#f00]">
          <X size={15} strokeWidth={3} />
        </button>
      </div>

      {/* WORKSPACE */}
      <main className="mt-px flex min-h-0 flex-1">
        <div className="mr-[4px] flex min-w-0 flex-1 flex-col">
          <div className="flex min-h-0 flex-1 border-r border-b border-l border-[#a0a0a0] bg-[#141414]">
            <div className="w-[578px] bg-[#0f0]" />
          </div>
          <Histogram />
        </div>
        <SidePanel />
      </main>

      {/* STATUS BAR */}
      <div className={`flex h-[23px] shrink-0 items-center gap-px pb-[2px] pl-px text-[11px] leading-[15px] whitespace-nowrap text-[#ff8c00] ${UI}`}>
        <div className="w-[429px] border border-[#6e6e6e] border-r-white border-b-white pl-[2px]">
          Previewing : 17 frames (0 dropped) in 0:01:15,5, 0,2 fps
        </div>
        <div className="w-[199px] border border-[#6e6e6e] border-r-white border-b-white pl-[2px]">
          Memory: 3 of 115 frames in use.
        </div>
        <div className="w-[224px] border border-[#6e6e6e] border-r-white border-b-white pl-[2px]">
          Cooler: 20%, Temp: -10,0C, Target: -10,0C
        </div>
        <span className="flex-1 pr-[5px] text-right">Frame:</span>
        <div className="h-[16px] w-[100px] border border-[#bcbcbc] bg-[#e6e6e6]">
          <div className="h-full w-[62%] bg-[#06b025]" />
        </div>
        <span className="w-[79px] pl-[3px]">2,9/1,1</span>
      </div>

      <Taskbar />
    </div>
  );
};

export default App;
